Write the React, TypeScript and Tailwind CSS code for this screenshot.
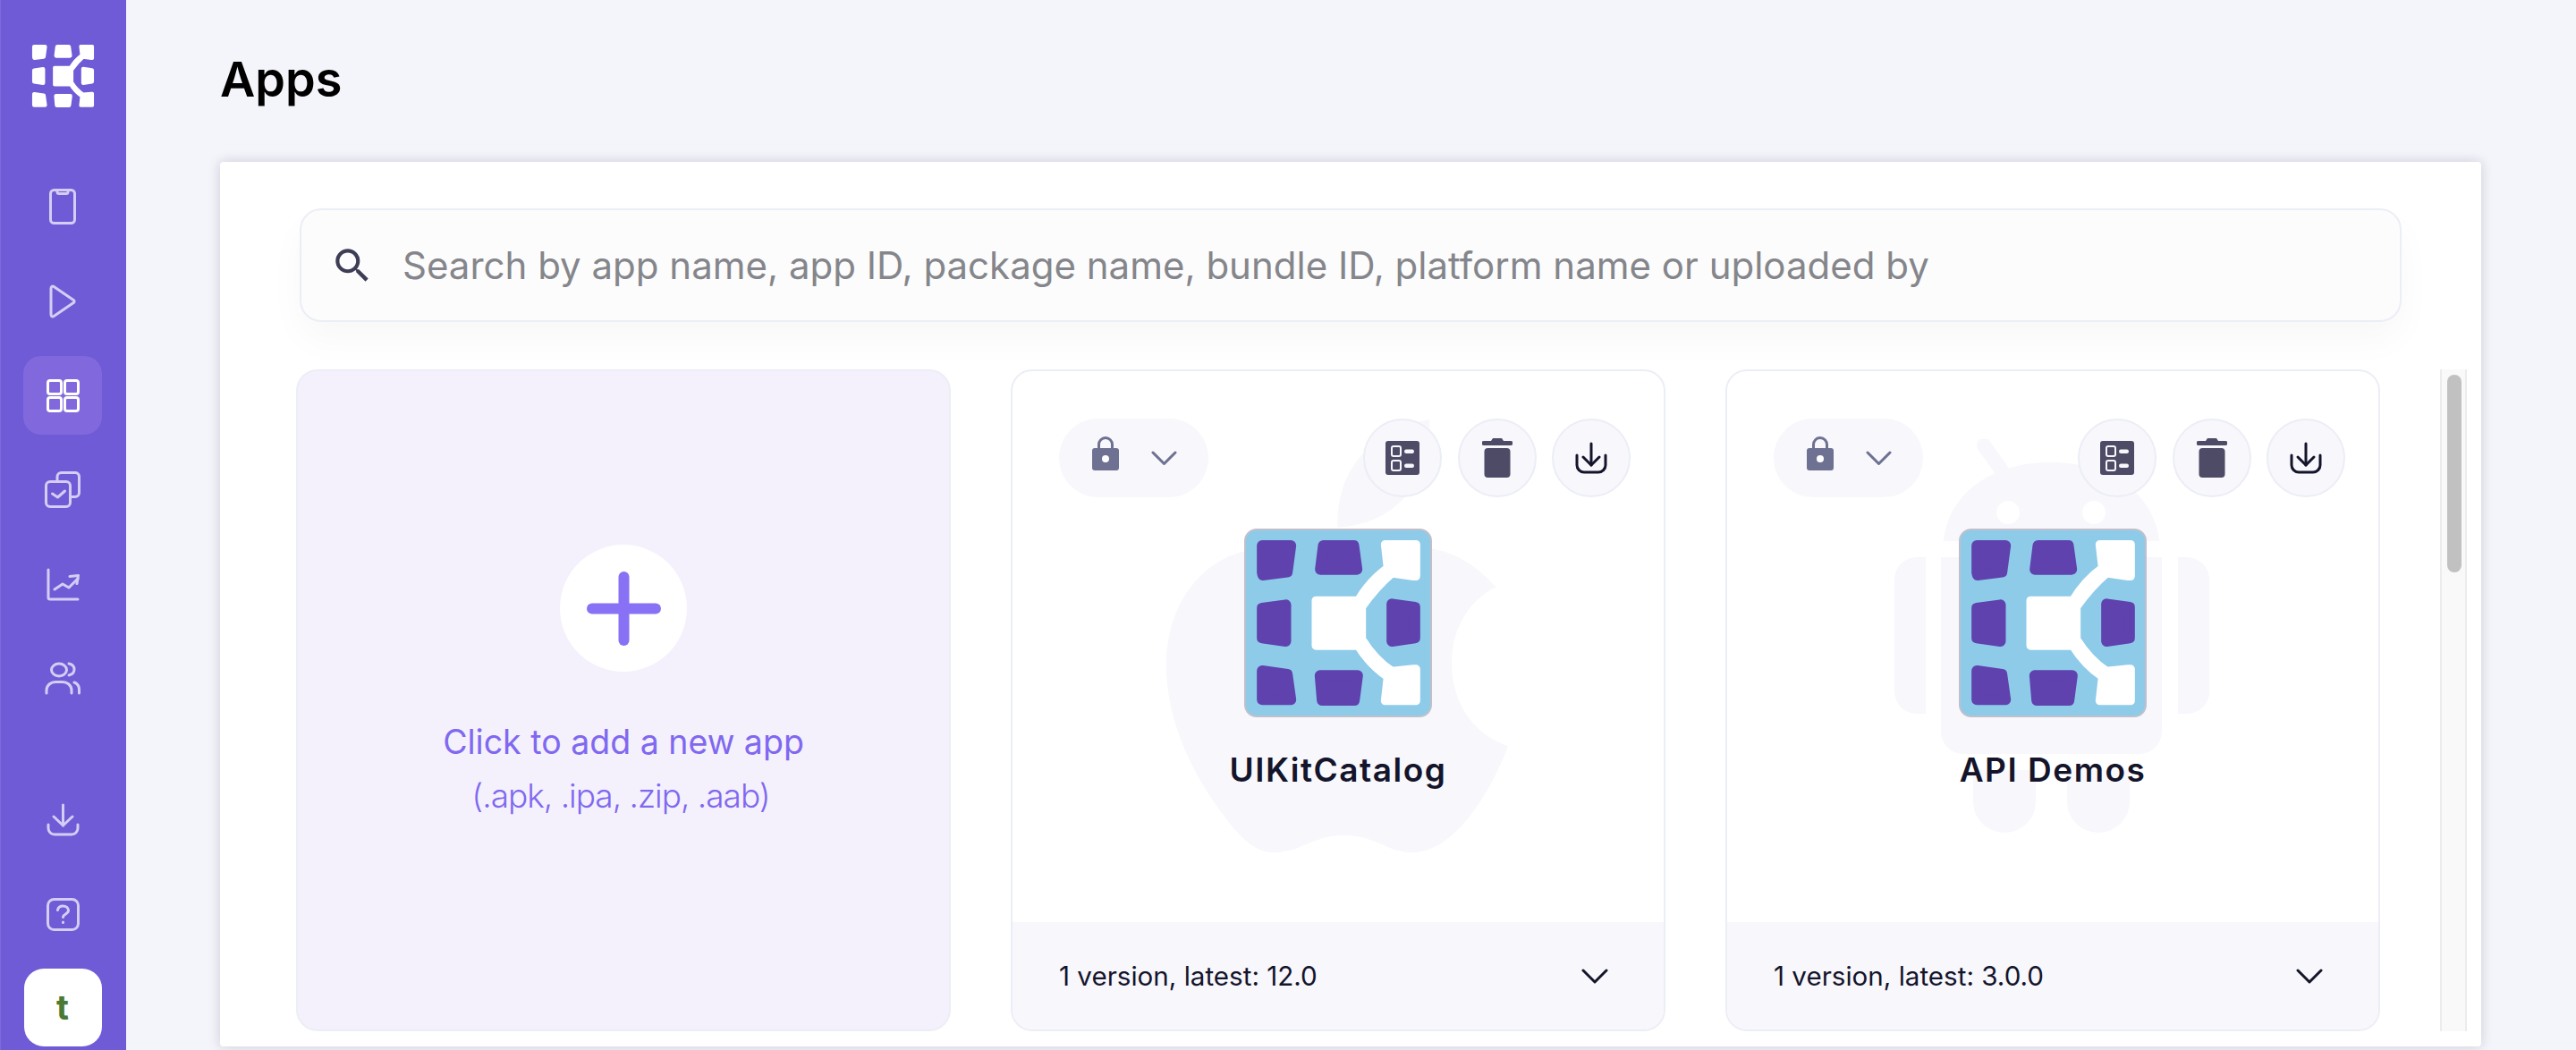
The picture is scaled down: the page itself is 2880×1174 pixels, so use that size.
import React from "react";

const font = { fontFamily: "Inter, 'Liberation Sans', sans-serif" };

function Mark({ outer, accent, className }: { outer?: string; accent?: string; className?: string }) {
  const p = accent ?? "#5f42ae";
  const w = outer ?? "#ffffff";
  const common = { strokeWidth: 36, strokeLinejoin: "round" as const };
  return (
    <svg viewBox="72 72 548 555" className={className} aria-hidden>
      <polygon points="90,90 186,90 174,179 92,189 90,180" fill={p} stroke={p} {...common} />
      <polygon points="295,90 397,90 408,170 285,170" fill={p} stroke={p} {...common} />
      <polygon points="90,300 169,289 169,411 90,400" fill={p} stroke={p} {...common} />
      <polygon points="525,286 602,297 602,400 525,411" fill={p} stroke={p} {...common} />
      <polygon points="90,510 174,522 186,607 90,607" fill={p} stroke={p} {...common} />
      <polygon points="284,526 410,526 399,609 291,609" fill={p} stroke={p} {...common} />
      <path
        d="M502 86 L606 86 L606 193 L597 193 L525 183 Q472 228 424 296 L424 404 Q468 474 525 511 L597 504 L606 504 L606 611 L502 611 L511 530 Q452 490 412 426 L270 426 L270 274 L412 274 Q452 207 511 165 Z"
        fill={w}
        stroke={w}
        strokeWidth={28}
        strokeLinejoin="round"
      />
    </svg>
  );
}

const Ico = ({ w, h, children }: { w: number; h: number; children: React.ReactNode }) => (
  <svg width={w} height={h} viewBox={`0 0 ${w} ${h}`} fill="none" stroke="currentColor" strokeWidth={3} strokeLinecap="round" strokeLinejoin="round" aria-hidden>
    {children}
  </svg>
);

const sideTop: { node: React.ReactNode; active?: boolean }[] = [
  {
    node: (
      <Ico w={30} h={40}>
        <rect x="1.5" y="1.5" width="27" height="37" rx="4" />
        <path d="M9 2v1.5a2 2 0 0 0 2 2h8a2 2 0 0 0 2-2V2" />
      </Ico>
    ),
  },
  {
    node: (
      <Ico w={30} h={38}>
        <path d="M2 4.5c0-2 1.6-3 3.2-2l22 15c1.2.9 1.2 2.1 0 3l-22 15c-1.6 1-3.2 0-3.2-2z" />
      </Ico>
    ),
  },
  {
    active: true,
    node: (
      <Ico w={37} h={37}>
        <rect x="1.5" y="1.5" width="15" height="15" rx="2.5" />
        <rect x="20.5" y="1.5" width="15" height="15" rx="2.5" />
        <rect x="1.5" y="20.5" width="15" height="15" rx="2.5" />
        <rect x="20.5" y="20.5" width="15" height="15" rx="2.5" />
      </Ico>
    ),
  },
  {
    node: (
      <Ico w={40} h={41}>
        <path d="M14 10V6a4.5 4.5 0 0 1 4.5-4.5h16A4.5 4.5 0 0 1 38.500 6v18a4.500 4.500 0 0 1-4.500 4.500h-4" />
        <rect x="1.500" y="11.500" width="27" height="28" rx="4.500" />
        <path d="M8.500 25l6 4 8-7" />
      </Ico>
    ),
  },
  {
    node: (
      <Ico w={37} h={37}>
        <path d="M2 2v31a2 2 0 0 0 2 2h31" />
        <path d="M9 24l9-6 7 4 10-10" />
        <path d="M26 9.500l9.500-1-1.500 9" />
      </Ico>
    ),
  },
  {
    node: (
      <Ico w={40} h={37}>
        <ellipse cx="16" cy="9" rx="8.500" ry="7" />
        <path d="M27 2c4 .8 6 3.500 6 6.500s-2 5.500-6 6.500" />
        <path d="M2 35v-3c0-6 5-9.500 10-9.500h8c5 0 10 3.500 10 9.500v3" />
        <path d="M33 23c3 1 5.500 4 5.500 8v4" />
      </Ico>
    ),
  },
];

const sideBottom: React.ReactNode[] = [
  <Ico w={37} h={37} key="d">
    <path d="M18.500 2v23" />
    <path d="M8 15l10.500 10L29 15" />
    <path d="M2 24v4a7 7 0 0 0 7 7h19a7 7 0 0 0 7-7v-4" />
  </Ico>,
  <Ico w={37} h={37} key="h">
    <rect x="1.500" y="1.500" width="34" height="34" rx="7" />
    <path d="M12.500 13.500c.5-3 3-4.500 6-4.500 3.300 0 6 2 6 5 0 4-6 3.800-6 7.500" />
    <path d="M18.500 27v.5" />
  </Ico>,
];

function SideItem({ children, active }: { children: React.ReactNode; active?: boolean }) {
  return (
    <div className={`flex h-[88px] w-[88px] items-center justify-center rounded-[20px] ${active ? "bg-[#8169dd] text-white" : "text-[#d5cdf4]"}`}>
      {children}
    </div>
  );
}

function Sidebar() {
  return (
    <aside className="flex h-full w-[141px] shrink-0 flex-col items-center border-l border-[#7d6bdb] bg-[#6f5bd6] pr-[2px]">
      <div className="mt-[50px] h-[70px] w-[71px]">
        <Mark outer="#ffffff" accent="#ffffff" className="h-full w-full" />
      </div>
      <div className="mt-[67px] flex flex-col gap-[17.600px]">
        {sideTop.map((s, i) => (
          <SideItem key={i} active={s.active}>
            {s.node}
          </SideItem>
        ))}
      </div>
      <div className="mt-auto mb-[4px] flex flex-col items-center gap-[18px]">
        {sideBottom.map((n, i) => (
          <SideItem key={i}>{n}</SideItem>
        ))}
        <div className="-mt-[1px] flex h-[87px] w-[87px] items-center justify-center rounded-[22px] bg-white text-[38px] font-bold text-[#4b7a33]" style={font}>
          t
        </div>
      </div>
    </aside>
  );
}

function RoundBtn({ children }: { children: React.ReactNode }) {
  return (
    <div className="flex h-[88px] w-[88px] items-center justify-center rounded-full border-2 border-[#eceef6] bg-[#f7f7fc]">{children}</div>
  );
}

function Apple() {
  return (
    <svg viewBox="380 180 790 1265" preserveAspectRatio="none" className="absolute left-[172px] top-[54px] h-[484px] w-[383px]" aria-hidden>
      <path
        fill="#f7f7fc"
        d="M1140 670C1090 600 1040 565 980 555C920 545 850 570 770 590C690 570 630 555 570 562C460 590 380 720 380 900C380 1060 440 1220 520 1350C560 1415 590 1445 630 1445C690 1445 720 1395 790 1395C860 1395 890 1445 945 1445C1040 1445 1120 1290 1168 1135C1080 1095 1038 1000 1038 890C1038 790 1080 705 1140 670Z"
      />
      <path fill="#f7f7fc" d="M987 180C860 210 770 320 775 495C880 490 990 400 987 180Z" />
    </svg>
  );
}

function Android() {
  const c = "#f7f7fc";
  return (
    <svg viewBox="0 0 352 440" className="absolute left-[187px] top-[76px] h-[440px] w-[352px]" aria-hidden>
      <path d="M100 7L122 38M252 7L230 38" stroke={c} strokeWidth={16} strokeLinecap="round" />
      <path d="M55 114C60 60 110 26 175 26s115 34 121 88z" fill={c} />
      <circle cx="127" cy="82" r="13" fill="#ffffff" />
      <circle cx="223" cy="82" r="13" fill="#ffffff" />
      <path d="M52 132H299V327a25 25 0 0 1-25 25H77a25 25 0 0 1-25-25z" fill={c} />
      <path d="M35 132V307H25A25 25 0 0 1 0 282V157A25 25 0 0 1 25 132z" fill={c} />
      <path d="M317 132V307H327A25 25 0 0 0 352 282V157A25 25 0 0 0 327 132z" fill={c} />
      <path d="M88 370H158V405A35 35 0 0 1 88 405z" fill={c} />
      <path d="M193 370H263V405A35 35 0 0 1 193 405z" fill={c} />
    </svg>
  );
}

function AppCard({ name, version, bg }: { name: string; version: string; bg: React.ReactNode }) {
  return (
    <div className="flex h-full w-[732px] shrink-0 flex-col overflow-hidden rounded-[24px] border-2 border-[#eceef6] bg-white" style={font}>
      <div className="relative flex flex-1 flex-col">
        {bg}
        <div className="relative flex items-center justify-between pl-[52px] pr-[37px] pt-[53px]">
          <div className="flex h-[88px] w-[167px] items-center gap-[36px] rounded-full bg-[#f7f7fc] pl-[37px]">
            <svg width="30" height="38" viewBox="0 0 30 38" className="-mt-[10px]" aria-hidden>
              <path d="M7.500 14V9a7.500 7.500 0 0 1 15 0v5" fill="none" stroke="#6e7191" strokeWidth="3" />
              <rect x="0" y="13" width="30" height="25" rx="3" fill="#6e7191" />
              <circle cx="15" cy="25" r="4" fill="#ffffff" />
            </svg>
            <svg width="29" height="16" viewBox="0 0 29 16" fill="none" stroke="#6e7191" strokeWidth="3" strokeLinecap="round" strokeLinejoin="round" aria-hidden>
              <path d="M2 2l12.500 12.500L27 2" />
            </svg>
          </div>
          <div className="flex gap-[17.500px]">
            <RoundBtn>
              <svg width="38" height="38" viewBox="0 0 38 38" aria-hidden>
                <rect width="38" height="38" rx="3" fill="#4e4b66" />
                <rect x="7" y="6" width="10" height="11" rx="2" fill="none" stroke="#f7f7fc" strokeWidth="2" />
                <rect x="7" y="22" width="10" height="11" rx="2" fill="none" stroke="#f7f7fc" strokeWidth="2" />
                <rect x="21" y="9.500" width="11" height="4.500" rx="2.200" fill="#f7f7fc" />
                <rect x="21" y="25.500" width="11" height="4.500" rx="2.200" fill="#f7f7fc" />
              </svg>
            </RoundBtn>
            <RoundBtn>
              <svg width="34" height="44" viewBox="0 0 34 44" aria-hidden>
                <path d="M12 0h10l2 3h8a2 2 0 0 1 0 5H2a2 2 0 0 1 0-5h8z" fill="#4e4b66" />
                <rect x="2.500" y="11" width="29" height="33" rx="4" fill="#4e4b66" />
              </svg>
            </RoundBtn>
            <RoundBtn>
              <svg width="36" height="36" viewBox="0 0 36 36" fill="none" stroke="#14142b" strokeWidth="3" strokeLinecap="round" strokeLinejoin="round" aria-hidden>
                <path d="M18 2v24" />
                <path d="M9 17l9 9 9-9" />
                <path d="M2 15v11a8 8 0 0 0 8 8h16a8 8 0 0 0 8-8V15" />
              </svg>
            </RoundBtn>
          </div>
        </div>
        <div className="relative mx-auto mt-[35px] flex h-[211px] w-[210px] items-center justify-center rounded-[14px] border-2 border-[#c0c0cc] bg-[#8dcbe9]">
          <Mark className="h-[185px] w-[183px]" />
        </div>
        <div className="relative mt-[39px] text-center text-[37px] leading-[40px] font-semibold tracking-[1.5px] text-[#14142b]">{name}</div>
      </div>
      <div className="flex h-[120px] items-center justify-between bg-[#f7f7fc] pl-[52px] pr-[62px]">
        <span className="text-[29.600px] text-[#14142b]">{version}</span>
        <svg width="30" height="17" viewBox="0 0 30 17" fill="none" stroke="#14142b" strokeWidth="3" strokeLinecap="round" strokeLinejoin="round" aria-hidden>
          <path d="M2 2l13 13L28 2" />
        </svg>
      </div>
    </div>
  );
}

export default function App() {
  return (
    <div className="flex h-[1174px] w-[2880px] overflow-hidden bg-[#f4f5fa]" style={font}>
      <Sidebar />
      <main className="flex min-w-0 flex-1 flex-col pl-[105px] pr-[106px]">
        <h1 className="mt-[58px] h-[123px] text-[54px] leading-[62px] font-semibold text-black">Apps</h1>
        <section className="flex h-[989px] flex-col rounded-[4px] bg-white pb-[17px] shadow-[0_0_14px_rgba(20,20,60,0.18)]">
          <div className="mx-[89px] mt-[52px] flex h-[127px] shrink-0 items-center gap-[31px] rounded-[24px] border-2 border-[#eceef6] bg-[#fcfcfd] pl-[32px] shadow-[0_20px_40px_rgba(20,20,60,0.03)]">
            <svg width="50" height="50" viewBox="0 0 24 24" fill="#3d3d56" aria-hidden>
              <path d="M15.500 14h-.79l-.28-.27A6.470 6.470 0 0 0 16 9.500 6.500 6.500 0 1 0 9.500 16c1.610 0 3.090-.59 4.230-1.570l.27.28v.79l5 4.990L20.490 19l-4.990-5zm-6 0C7.010 14 5 11.990 5 9.500S7.010 5 9.500 5 14 7.010 14 9.500 11.990 14 9.500 14z" />
            </svg>
            <span className="text-[42px] whitespace-nowrap text-[#85868b]">Search by app name, app ID, package name, bundle ID, platform name or uploaded by</span>
          </div>
          <div className="mt-[53px] ml-[85px] mr-[17px] flex min-h-0 flex-1 gap-[67px]">
            <div className="flex h-full w-[732px] shrink-0 flex-col items-center rounded-[24px] border-2 border-[#eceef6] bg-[#f4f1fc] pt-[194px] text-[#8068f0]">
              <div className="flex h-[142px] w-[142px] items-center justify-center rounded-full bg-white">
                <svg width="83" height="83" viewBox="0 0 83 83" aria-hidden>
                  <rect x="35.500" y="0" width="12" height="83" rx="6" fill="#8871f5" />
                  <rect x="0" y="35.500" width="83" height="12" rx="6" fill="#8871f5" />
                </svg>
              </div>
              <div className="mt-[49px] text-[37.500px] leading-[60px]">Click to add a new app</div>
              <div className="pr-[6px] text-[37px] leading-[60px] font-light tracking-[-1px]">(.apk, .ipa, .zip, .aab)</div>
            </div>
            <AppCard name="UIKitCatalog" version="1 version, latest: 12.0" bg={<Apple />} />
            <AppCard name="API Demos" version="1 version, latest: 3.0.0" bg={<Android />} />
            <div className="h-full w-[30px] shrink-0 border-x-2 border-[#ececec] bg-[#f9f9f9] pl-[6px] pt-[6px]">
              <div className="h-[221px] w-[16px] rounded-full bg-[#c1c1c1]" />
            </div>
          </div>
        </section>
      </main>
    </div>
  );
}
